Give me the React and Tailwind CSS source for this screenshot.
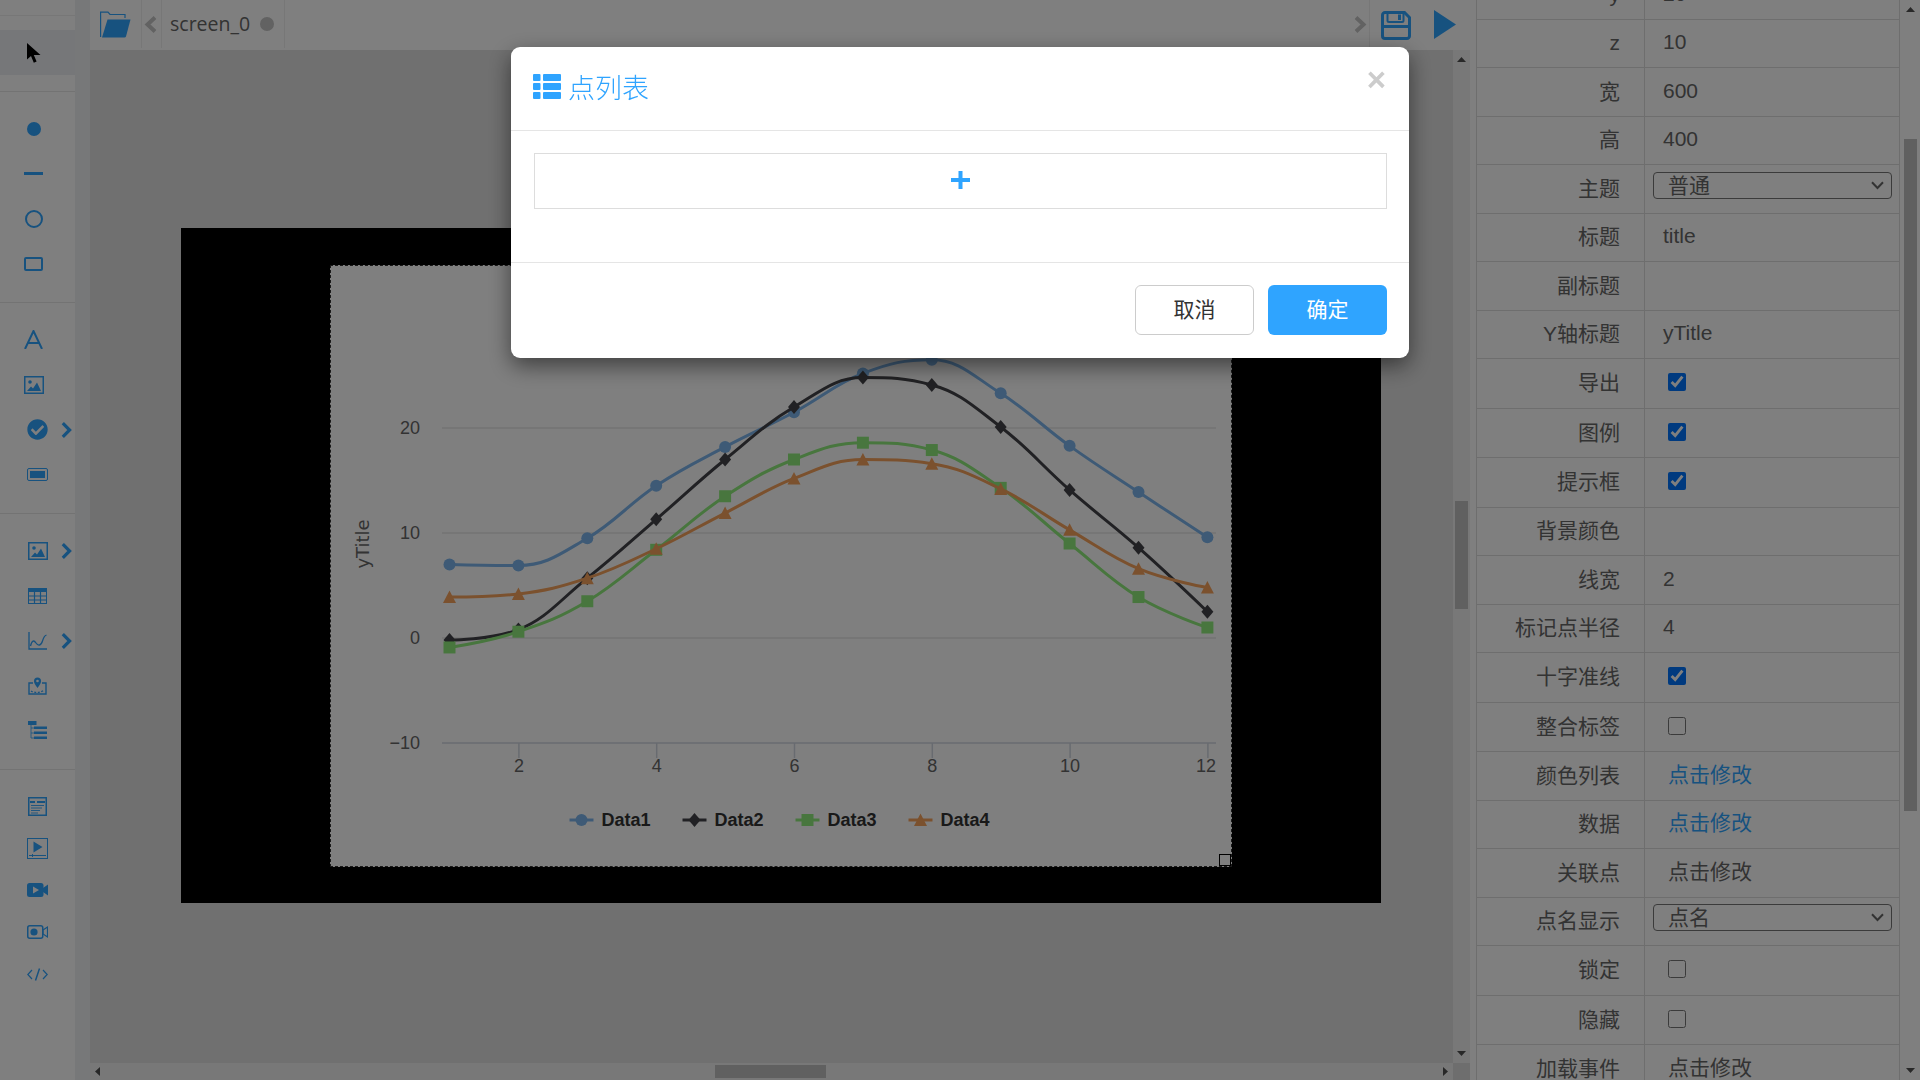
import { FaCheckCircle } from "react-icons/fa";

const series = [
  { name: "Data1", color: "#7cb5ec", marker: "circle", data: [7.0, 6.9, 9.5, 14.5, 18.2, 21.5, 25.2, 26.5, 23.3, 18.3, 13.9, 9.6] },
  { name: "Data2", color: "#434348", marker: "diamond", data: [-0.2, 0.8, 5.7, 11.3, 17.0, 22.0, 24.8, 24.1, 20.1, 14.1, 8.6, 2.5] },
  { name: "Data3", color: "#90ed7d", marker: "square", data: [-0.9, 0.6, 3.5, 8.4, 13.5, 17.0, 18.6, 17.9, 14.3, 9.0, 3.9, 1.0] },
  { name: "Data4", color: "#f7a35c", marker: "triangle", data: [3.9, 4.2, 5.7, 8.5, 11.9, 15.2, 17.0, 16.6, 14.2, 10.3, 6.6, 4.8] },
];

const px = (i) => 449.5 + i * 68.9;
const py = (v) => 638 - v * 10.5;

function splinePath(data) {
  const pts = data.map((v, i) => [px(i), py(v)]);
  const conts = pts.map(([x, y], i) => {
    if (i === 0 || i === pts.length - 1) return { lx: x, ly: y, rx: x, ry: y };
    const [ax, ay] = pts[i - 1];
    const [bx, by] = pts[i + 1];
    const lx = (1.5 * x + ax) / 2.5;
    const rx = (1.5 * x + bx) / 2.5;
    let ly = (1.5 * y + ay) / 2.5;
    let ry = (1.5 * y + by) / 2.5;
    const c = ((ry - ly) * (rx - x)) / (rx - lx) + y - ry;
    ly += c;
    ry += c;
    if (ly > ay && ly > y) {
      ly = Math.max(ay, y);
      ry = 2 * y - ly;
    } else if (ly < ay && ly < y) {
      ly = Math.min(ay, y);
      ry = 2 * y - ly;
    }
    if (ry > by && ry > y) {
      ry = Math.max(by, y);
      ly = 2 * y - ry;
    } else if (ry < by && ry < y) {
      ry = Math.min(by, y);
      ly = 2 * y - ry;
    }
    return { lx, ly, rx, ry };
  });
  let d = `M${pts[0][0]} ${pts[0][1]}`;
  for (let i = 1; i < pts.length; i++) {
    d += ` C${conts[i - 1].rx} ${conts[i - 1].ry} ${conts[i].lx} ${conts[i].ly} ${pts[i][0]} ${pts[i][1]}`;
  }
  return d;
}

function Marker({ type, x, y, color }) {
  if (type === "circle") return <circle cx={x} cy={y} r="6" fill={color} />;
  if (type === "square") return <rect x={x - 6} y={y - 6} width="12" height="12" fill={color} />;
  if (type === "diamond") return <path d={`M${x} ${y - 7}L${x + 6} ${y}L${x} ${y + 7}L${x - 6} ${y}Z`} fill={color} />;
  return <path d={`M${x} ${y - 6.5}L${x + 6.5} ${y + 6}L${x - 6.5} ${y + 6}Z`} fill={color} />;
}

function Chart() {
  return (
    <svg width="900" height="600" viewBox="331 266 900 600" className="block">
      {[20, 10, 0].map((v) => (
        <line key={v} x1="442" x2="1216" y1={py(v)} y2={py(v)} stroke="#e6e6e6" strokeWidth="1.5" />
      ))}
      <line x1="442" x2="1216" y1={py(-10)} y2={py(-10)} stroke="#d0d6e0" strokeWidth="1.5" />
      {[2, 4, 6, 8, 10, 12].map((n) => (
        <g key={n}>
          <line x1={px(n - 1) + 0.5} x2={px(n - 1) + 0.5} y1={py(-10)} y2={py(-10) + 15} stroke="#d0d6e0" strokeWidth="1.5" />
          <text x={px(n - 1) + (n === 12 ? -1.5 : 0.5)} y="772" textAnchor="middle" fontSize="18" fill="#666">{n}</text>
        </g>
      ))}
      {[20, 10, 0, -10].map((v) => (
        <text key={v} x="420" y={py(v) + 5.5} textAnchor="end" fontSize="18" fill="#666">{v === -10 ? "−10" : v}</text>
      ))}
      <text x="0" y="0" transform="translate(369 544) rotate(-90)" textAnchor="middle" fontSize="18" fill="#666" fontFamily="'DejaVu Sans', sans-serif">yTitle</text>
      {series.map((s) => (
        <g key={s.name}>
          <path d={splinePath(s.data)} fill="none" stroke={s.color} strokeWidth="3" />
          {s.data.map((v, i) => (
            <Marker key={i} type={s.marker} x={px(i)} y={py(v)} color={s.color} />
          ))}
        </g>
      ))}
      {series.map((s, i) => {
        const x = 569.5 + i * 113;
        return (
          <g key={s.name}>
            <line x1={x} x2={x + 24} y1="820" y2="820" stroke={s.color} strokeWidth="3" />
            <Marker type={s.marker} x={x + 12} y={820} color={s.color} />
            <text x={x + 32} y="826" fontSize="18" fontWeight="700" fill="#333">{s.name}</text>
          </g>
        );
      })}
    </svg>
  );
}

const ImageIcon = () => (
  <svg width="20" height="18" viewBox="0 0 20 18">
    <rect x="0.75" y="0.75" width="18.5" height="16.5" fill="none" stroke="currentColor" strokeWidth="1.5" />
    <circle cx="6" cy="6" r="1.8" fill="currentColor" />
    <path d="M3 15L7 10.5L9 12.5L13 6.5L17 15Z" fill="currentColor" />
  </svg>
);

const TableIcon = () => (
  <svg width="19" height="16" viewBox="0 0 19 16" fill="none" stroke="currentColor">
    <rect x="0.5" y="0.5" width="18" height="15" strokeWidth="1" />
    <rect x="0" y="0" width="19" height="4" fill="currentColor" stroke="none" />
    <path d="M0 8H19M0 12H19" strokeWidth="1.2" />
    <path d="M6.5 4V16M12.5 4V16" strokeWidth="1.2" />
  </svg>
);

const ChartIcon = () => (
  <svg width="19" height="18" viewBox="0 0 19 18" fill="none" stroke="currentColor" strokeWidth="1.3">
    <path d="M1 0V17H19" />
    <path d="M2.5 14C4 8 6 8 8 11C10 14 13 14 14.5 9C15.5 5.5 17 3.5 18.5 3" />
  </svg>
);

const MapIcon = () => (
  <svg width="19" height="18" viewBox="0 0 19 18" fill="none" stroke="currentColor" strokeWidth="1.4">
    <path d="M5 6H1V17H18V6H14" />
    <path d="M3 14C6 16 13 16 16 13" strokeDasharray="2 1.5" />
    <path d="M9.5 11C7 7.5 6 6 6 4A3.5 3.5 0 0 1 13 4C13 6 12 7.5 9.5 11Z" fill="currentColor" stroke="none" />
    <circle cx="9.5" cy="4" r="1.3" fill="#ffffff" stroke="none" />
  </svg>
);

const TreeIcon = () => (
  <svg width="19" height="19" viewBox="0 0 19 19" fill="currentColor">
    <rect x="0" y="0" width="8.5" height="4" />
    <rect x="6" y="5.5" width="13" height="2.5" />
    <rect x="6" y="10.5" width="13" height="2.5" />
    <rect x="6" y="15.5" width="13" height="2.5" />
    <path d="M3 4V17H6M3 7H6M3 12H6" fill="none" stroke="currentColor" strokeWidth="0.8" />
  </svg>
);

const FormIcon = () => (
  <svg width="19" height="19" viewBox="0 0 19 19" fill="none" stroke="currentColor">
    <rect x="0.75" y="0.75" width="17.5" height="17.5" strokeWidth="1.5" />
    <path d="M2 5H7M9 5H17" strokeWidth="2.2" />
    <path d="M3 8.5H16M3 11H14M3 13.5H12M3 16H10" strokeWidth="0.9" />
  </svg>
);

const PlayBoxIcon = () => (
  <svg width="21" height="21" viewBox="0 0 21 21" fill="none" stroke="currentColor">
    <rect x="0.5" y="0.5" width="20" height="20" strokeWidth="1" />
    <path d="M6.5 3.5L15.5 9L6.5 14.5Z" fill="currentColor" stroke="none" />
    <path d="M2 17.5H19M5.5 16V19" strokeWidth="1" />
  </svg>
);

const VideoIcon = () => (
  <svg width="21" height="14" viewBox="0 0 21 14">
    <rect x="0" y="0" width="16.5" height="14" rx="2.5" fill="currentColor" />
    <path d="M16 5L21 1.5V12.5L16 9Z" fill="currentColor" />
    <path d="M6 3.5L12 7L6 10.5Z" fill="#ffffff" />
  </svg>
);

const RecordIcon = () => (
  <svg width="21" height="14" viewBox="0 0 21 14">
    <rect x="0.75" y="0.75" width="15" height="12.5" rx="2" fill="none" stroke="currentColor" strokeWidth="1.5" />
    <path d="M16 5L20.5 2V12L16 9Z" fill="none" stroke="currentColor" strokeWidth="1.2" />
    <circle cx="7" cy="7" r="3.6" fill="currentColor" />
  </svg>
);

const CodeIcon = () => (
  <svg width="21" height="13" viewBox="0 0 21 13" fill="none" stroke="currentColor" strokeWidth="1.2">
    <path d="M5 2L0.8 6.5L5 11M16 2L20.2 6.5L16 11" />
    <path d="M12.5 0.5L8.5 12.5" strokeWidth="1.5" />
  </svg>
);

const SaveIcon = () => (
  <svg width="30" height="29" viewBox="0 0 30 29" fill="none" stroke="currentColor">
    <path d="M4 1.5H23.5L28.5 6.5V25A2.5 2.5 0 0 1 26 27.5H4A2.5 2.5 0 0 1 1.5 25V4A2.5 2.5 0 0 1 4 1.5Z" strokeWidth="3" />
    <path d="M6.5 1.5V9.5Q6.5 11 8 11H21Q22.5 11 22.5 9.5V1.5" strokeWidth="2" />
    <rect x="17" y="3.5" width="3" height="5.5" fill="currentColor" stroke="none" />
    <path d="M2 15.5H28" strokeWidth="3" />
  </svg>
);

const Chevron = () => (
  <svg width="11" height="16" viewBox="0 0 11 16" fill="none" stroke="currentColor" strokeWidth="3.2">
    <path d="M1.8 1.2L8.6 8L1.8 14.8" />
  </svg>
);

function SideItem({ children, arrow, narrow, tall }) {
  return (
    <div className={`flex items-center ${tall ? "h-[42px]" : "h-[45px]"} ${narrow ? "pl-[23px]" : "pl-[27px]"}`}>
      <div className="w-[21px] flex items-center justify-center">{children}</div>
      {arrow && <div className="ml-[13px]"><Chevron /></div>}
    </div>
  );
}

function Sidebar() {
  return (
    <div className="w-[75px] shrink-0 h-full bg-white text-[#2fa4ff] overflow-hidden">
      <div className="h-[16px] border-b border-[#eeeeee]" />
      <div className="h-[76px] border-b border-[#e6e6e6] pt-[14px]">
        <div className="h-[45px] bg-[#eceef2] flex items-center pl-[27px]">
          <svg width="14" height="20" viewBox="0 0 14 20">
            <path d="M0 0V16.5L4 13L6.8 19.8L9.6 18.6L6.8 12H13.5Z" fill="#000000" />
          </svg>
        </div>
      </div>
      <div className="h-[211px] border-b border-[#e6e6e6] pt-[14px]">
        <SideItem narrow><div className="w-[14px] h-[14px] rounded-full bg-[#2fa4ff]" /></SideItem>
        <SideItem narrow><div className="w-[19px] h-[3px] bg-[#2fa4ff]" /></SideItem>
        <SideItem narrow><div className="w-[18px] h-[18px] rounded-full border-2 border-[#2fa4ff]" /></SideItem>
        <SideItem narrow><div className="w-[19px] h-[14px] rounded-[2px] border-2 border-[#2fa4ff]" /></SideItem>
      </div>
      <div className="h-[211px] border-b border-[#e6e6e6] pt-[14px]">
        <SideItem narrow>
          <svg width="19" height="19" viewBox="0 0 19 19" fill="none" stroke="currentColor" strokeWidth="2">
            <path d="M1 19L9.5 1L18 19M4 13H15" />
          </svg>
        </SideItem>
        <SideItem narrow><ImageIcon /></SideItem>
        <SideItem arrow><FaCheckCircle size={21} /></SideItem>
        <SideItem>
          <div className="w-[21px] h-[13px] rounded-[2px] border border-[#2fa4ff] p-[2px]"><div className="w-full h-full bg-[#2fa4ff]" /></div>
        </SideItem>
      </div>
      <div className="h-[256px] border-b border-[#e6e6e6] pt-[14px]">
        <SideItem arrow><ImageIcon /></SideItem>
        <SideItem><TableIcon /></SideItem>
        <SideItem arrow><ChartIcon /></SideItem>
        <SideItem><MapIcon /></SideItem>
        <SideItem><TreeIcon /></SideItem>
      </div>
      <div className="pt-[15px]">
        <SideItem tall><FormIcon /></SideItem>
        <SideItem tall><PlayBoxIcon /></SideItem>
        <SideItem tall><VideoIcon /></SideItem>
        <SideItem tall><RecordIcon /></SideItem>
        <SideItem tall><CodeIcon /></SideItem>
      </div>
    </div>
  );
}

function TabBar() {
  return (
    <div className="h-[50px] shrink-0 bg-white flex items-stretch">
      <div className="w-[51px] flex items-center justify-center pb-[2px] pr-[1px]">
        <svg width="31" height="27" viewBox="0 0 31 27" className="text-[#2fa4ff]">
          <path d="M0.6 26V1.2H8L10 3.5H25V7" fill="none" stroke="currentColor" strokeWidth="1.2" />
          <path d="M2 26.5L7.5 8.5H30.5L26 25.5Q25.6 26.5 24.5 26.5Z" fill="currentColor" />
        </svg>
      </div>
      <div className="w-[21px] mb-[2px] border-x border-[#eeeeee] flex items-center justify-center pr-[2px] text-[#c4c4c4]">
        <svg width="13" height="17" viewBox="0 0 13 17" fill="none" stroke="currentColor" strokeWidth="4">
          <path d="M11 1.5L3.5 8.5L11 15.5" />
        </svg>
      </div>
      <div className="w-[123px] mb-[2px] border-r border-[#eeeeee] flex items-center pl-[8px] gap-[10px]">
        <span className="text-[19.5px] text-[#666] [font-family:'Open_Sans',sans-serif]">screen_0</span>
        <span className="w-[14px] h-[14px] rounded-full bg-[#c4c4c4]" />
      </div>
      <div className="flex-1" />
      <div className="w-[21px] mb-[2px] border-r border-[#eeeeee] flex items-center justify-center pl-[3px] text-[#c4c4c4]">
        <svg width="13" height="17" viewBox="0 0 13 17" fill="none" stroke="currentColor" strokeWidth="4">
          <path d="M2 1.5L9.5 8.5L2 15.5" />
        </svg>
      </div>
      <div className="w-[100px] flex items-center pl-[11px] text-[#2fa4ff]">
        <SaveIcon />
        <svg width="22" height="29" viewBox="0 0 22 29" className="ml-[23px] mb-[1px]">
          <path d="M0 0L22 14.5L0 29Z" fill="currentColor" />
        </svg>
      </div>
    </div>
  );
}

const Tri = ({ dir }) => {
  const d = {
    up: "M0 5L4.5 0L9 5Z",
    down: "M0 0L9 0L4.5 5Z",
    left: "M5 0V9L0 4.5Z",
    right: "M0 0V9L5 4.5Z",
  }[dir];
  const box = dir === "up" || dir === "down" ? [9, 5] : [5, 9];
  return (
    <svg width={box[0]} height={box[1]} viewBox={`0 0 ${box[0]} ${box[1]}`} className="shrink-0">
      <path d={d} fill="#505050" />
    </svg>
  );
};

function Workspace() {
  return (
    <div className="w-[1380px] shrink-0 h-full flex flex-col">
      <TabBar />
      <div className="flex-1 flex min-h-0">
        <div className="w-[1363px] bg-[#e0e0e0] pl-[91px] pt-[178px]">
          <div className="w-[1200px] h-[675px] bg-black pl-[149px] pt-[37px]">
            <div className="relative w-[902px] h-[602px] bg-white border border-dashed border-[#333]">
              <Chart />
              <div className="absolute right-0 bottom-0 w-[12px] h-[12px] border border-black" />
            </div>
          </div>
        </div>
        <div className="w-[17px] bg-[#f1f1f1] flex flex-col items-center pt-[7px] pb-[7px]">
          <Tri dir="up" />
          <div className="w-[13px] h-[108px] bg-[#c1c1c1] mt-[439px]" />
          <div className="flex-1" />
          <Tri dir="down" />
        </div>
      </div>
      <div className="h-[17px] shrink-0 flex">
        <div className="w-[1363px] bg-[#f1f1f1] flex items-center px-[5px]">
          <Tri dir="left" />
          <div className="w-[111px] h-[13px] bg-[#c1c1c1] ml-[615px]" />
          <div className="flex-1" />
          <Tri dir="right" />
        </div>
        <div className="w-[17px] bg-[#dcdcdc]" />
      </div>
    </div>
  );
}

const rows = [
  { label: "y", value: "20" },
  { label: "z", value: "10" },
  { label: "宽", value: "600" },
  { label: "高", value: "400" },
  { label: "主题", select: "普通" },
  { label: "标题", value: "title" },
  { label: "副标题", value: "" },
  { label: "Y轴标题", value: "yTitle" },
  { label: "导出", check: true },
  { label: "图例", check: true },
  { label: "提示框", check: true },
  { label: "背景颜色", value: "" },
  { label: "线宽", value: "2" },
  { label: "标记点半径", value: "4" },
  { label: "十字准线", check: true },
  { label: "整合标签", check: false },
  { label: "颜色列表", link: true },
  { label: "数据", link: true },
  { label: "关联点", edit: true },
  { label: "点名显示", select: "点名" },
  { label: "锁定", check: false },
  { label: "隐藏", check: false },
  { label: "加载事件", edit: true },
];

function PropRow({ row }) {
  const isCheck = row.check !== undefined;
  return (
    <div className={`flex border-b border-[#dddddd] text-[21px] text-[#666] ${isCheck ? "h-[49.5px]" : "h-[48.5px]"}`}>
      <div className="w-[168px] shrink-0 border-r border-[#dddddd] flex items-center justify-end pr-[24px] pb-[1px]">{row.label}</div>
      <div className="flex-1 min-w-0 flex items-center">
        {row.value !== undefined && <span className="pl-[18px] pb-[3px]">{row.value}</span>}
        {row.link && <span className="pl-[23px] pb-[3px] text-[#2fa4ff]">点击修改</span>}
        {row.edit && <span className="pl-[23px] pb-[3px]">点击修改</span>}
        {row.select && (
          <div className="relative ml-[8px] mb-[7px] w-[239px] h-[27px]">
            <select defaultValue={row.select} className="appearance-none block w-full h-full pl-[14px] border border-[#767676] rounded-[4px] bg-white text-[21px] leading-none text-[#666]">
              <option>{row.select}</option>
            </select>
            <svg width="13" height="9" viewBox="0 0 13 9" fill="none" stroke="#666" strokeWidth="2" className="absolute right-[8px] top-[9px]">
              <path d="M1 1.2L6.5 7L12 1.2" />
            </svg>
          </div>
        )}
        {isCheck && <input type="checkbox" defaultChecked={row.check} readOnly className="ml-[23px] mb-[2px] w-[18px] h-[18px]" />}
      </div>
    </div>
  );
}

function PropPanel() {
  return (
    <div className="flex-1 h-full flex bg-white pl-[6px] overflow-hidden">
      <div className="w-[424px] shrink-0 h-full border-x border-[#dddddd] overflow-hidden">
        <div className="-mt-[29px]">
          {rows.map((row) => (
            <PropRow key={row.label} row={row} />
          ))}
        </div>
      </div>
      <div className="flex-1 flex flex-col items-center pt-[7px] pb-[7px]">
        <Tri dir="up" />
        <div className="w-[13px] h-[672px] bg-[#c1c1c1] mt-[127px]" />
        <div className="flex-1" />
        <Tri dir="down" />
      </div>
    </div>
  );
}

function Dialog() {
  return (
    <div className="fixed inset-0 z-50 bg-black/50">
      <div className="w-[898px] h-[311px] mx-auto mt-[47px] bg-white rounded-[9px] shadow-[0_8px_22px_rgba(0,0,0,0.5)] flex flex-col">
        <div className="h-[84px] shrink-0 border-b border-[#e5e5e5] flex items-start justify-between pl-[22px] pr-[23px] pt-[26px]">
          <div className="flex items-center gap-[7px] text-[#2fa4ff]">
            <svg width="28" height="25" viewBox="0 0 28 25" fill="currentColor" className="-mt-[6px]">
              <rect x="0" y="0" width="7.5" height="7" rx="1" />
              <rect x="10" y="0" width="18" height="7" rx="1" />
              <rect x="0" y="9" width="7.5" height="7" rx="1" />
              <rect x="10" y="9" width="18" height="7" rx="1" />
              <rect x="0" y="18" width="7.5" height="7" rx="1" />
              <rect x="10" y="18" width="18" height="7" rx="1" />
            </svg>
            <span className="text-[27px] leading-[32px] font-light">点列表</span>
          </div>
          <span className="-mt-[15px] text-[33px] leading-[44px] font-bold text-[#cccccc]">×</span>
        </div>
        <div className="h-[132px] shrink-0 border-b border-[#e5e5e5] pl-[23px] pr-[22px] pt-[22px]">
          <div className="h-[56px] border border-[#dddddd] flex items-center justify-center pb-[2px]">
            <svg width="19" height="18" viewBox="0 0 19 18" fill="#2fa4ff">
              <rect x="0" y="7" width="19" height="4" />
              <rect x="7.5" y="0" width="4" height="18" />
            </svg>
          </div>
        </div>
        <div className="flex-1 flex justify-end items-start gap-[14px] px-[22px] pt-[22px]">
          <button className="w-[119px] h-[50px] border border-[#cccccc] rounded-[6px] bg-white text-[21px] text-[#333]">取消</button>
          <button className="w-[119px] h-[50px] rounded-[6px] bg-[#2fa4ff] text-[21px] text-white">确定</button>
        </div>
      </div>
    </div>
  );
}

export default function App() {
  return (
    <div className="w-screen h-screen overflow-hidden flex font-['Liberation_Sans','Noto_Sans_CJK_SC',sans-serif]">
      <Sidebar />
      <div className="w-[15px] shrink-0 h-full bg-[#eef0f3]" />
      <Workspace />
      <PropPanel />
      <Dialog />
    </div>
  );
}
